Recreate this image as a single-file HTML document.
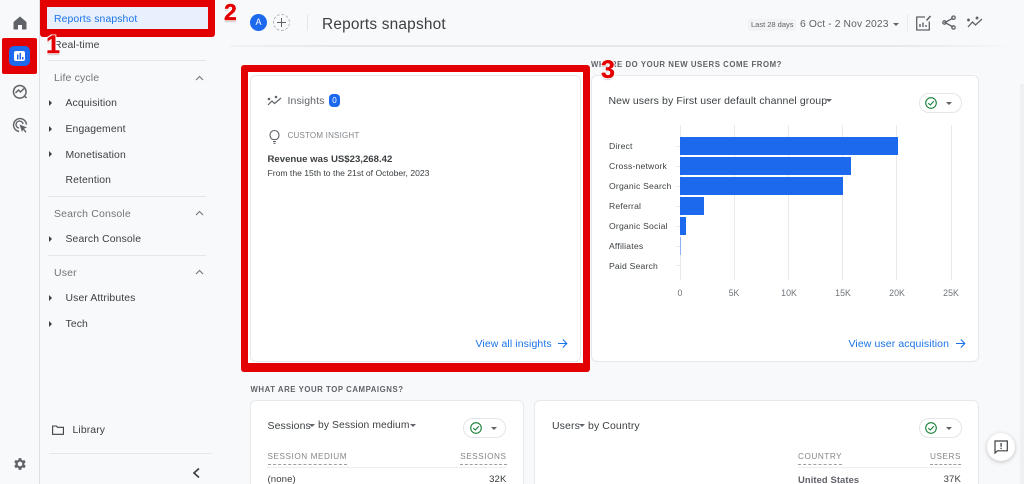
<!DOCTYPE html>
<html lang="en"><head><meta charset="utf-8"><title>Reports snapshot</title>
<style>
html,body{margin:0;padding:0;width:1024px;height:484px;overflow:hidden;background:#f8f9fb;font-family:"Liberation Sans",sans-serif;color:#3c4043}
#p{position:relative;width:1024px;height:484px;overflow:hidden;background:#f8f9fb;filter:blur(.3px)}
.a{position:absolute;white-space:nowrap}
.nav{font-size:10.4px;color:#3c4043;letter-spacing:.12px;line-height:14px}
.sec{font-size:10.5px;color:#70757a;letter-spacing:.15px;line-height:14px}
.hr{position:absolute;height:1px;background:#e4e6e9}
.tri{position:absolute;width:0;height:0;border-top:3px solid transparent;border-bottom:3px solid transparent;border-left:3px solid #3c4043}
.card{position:absolute;background:#fff;border:1px solid #e6e8ec;border-radius:6px;box-sizing:border-box}
.red{position:absolute;background:#e30000}
.num{position:absolute;font-weight:bold;color:#e30000;-webkit-text-stroke:.4px #e30000;text-shadow:1px 1px 0 #fff,-1px 1px 0 #fff,1px -1px 0 #fff,-1px -1px 0 #fff,0 2px 1px #ccc;line-height:1}
.lbl{font-size:8.6px;color:#3c4043;letter-spacing:.2px;left:609px;line-height:12px}
.ax{font-size:8.8px;color:#70757a;top:287px;line-height:12px;transform:translateX(-50%)}
.grid{position:absolute;top:125px;width:1px;height:155px;background:#e8eaed}
.tick{position:absolute;left:676px;width:4px;height:1px;background:#e8eaed}
.bar{position:absolute;left:680px;height:18px;background:#1c69ee}
.link{font-size:10.5px;color:#1a73e8;letter-spacing:.1px;line-height:14px}
.h{font-size:7.8px;font-weight:bold;color:#5f6368;letter-spacing:.55px;line-height:11px}
.th{font-size:8.2px;color:#80868b;letter-spacing:.55px;line-height:11px;border-bottom:1px dashed #9aa0a6;padding-bottom:2px}
.pill{position:absolute;width:43px;height:20px;border:1px solid #e3e5e8;border-radius:11px;background:#fff;box-sizing:border-box}
.dd{position:absolute;width:0;height:0;border-left:3px solid transparent;border-right:3px solid transparent;border-top:3px solid #5f6368}
.t{font-size:10.5px;color:#3c4043;letter-spacing:.1px;line-height:14px}
svg{position:absolute;overflow:visible}
</style></head><body><div id="p">

<!-- rail -->
<div class="a" style="left:39px;top:0;width:1px;height:484px;background:#dfe1e5"></div>
<svg style="left:12px;top:15px" width="16" height="16" viewBox="0 0 16 16"><path d="M8 1.500 1.500 7v7.500h4.500V10h4v4.500h4.500V7z" fill="#5f6368"/></svg>
<div class="red" style="left:2px;top:38px;width:35px;height:36px;border-radius:2px"></div>
<div class="a" style="left:9px;top:46px;width:21px;height:20px;background:#1c69ee;border-radius:5px"></div>
<div class="a" style="left:14px;top:51px;width:11px;height:10px;background:#fff;border-radius:2px"></div>
<svg style="left:14px;top:51px" width="11" height="10"><path d="M3 3.500h1.500v5H3zM5.500 2H7v6.500H5.500zM8 6h1.500v2.500H8z" fill="#1c69ee"/></svg>
<svg style="left:12px;top:83px" width="16" height="16" viewBox="0 0 16 16" fill="none" stroke="#5f6368" stroke-width="1.500"><path d="M13 13.500 14.500 15M14 8A6.300 6.300 0 1 1 1.500 8 6.300 6.300 0 0 1 14 8z"/><path d="M3.500 10 6.500 7l2 2 3.500-3.500"/></svg>
<svg style="left:12px;top:117px" width="16" height="17" viewBox="0 0 16 17" fill="none" stroke="#5f6368" stroke-width="1.400"><path d="M7 14.500A6.500 6.500 0 1 1 14.500 7.500"/><path d="M7 11a3.500 3.500 0 1 1 4-4"/><path d="M7.500 7.500 15 10.500l-3 1.200 2.500 3-1 1-2.500-3L10 15z" fill="#5f6368" stroke="none"/></svg>
<svg style="left:12px;top:456px" width="16" height="16" viewBox="0 0 24 24"><path d="M19.400 13a7.500 7.500 0 0 0 0-2l2.100-1.600-2-3.500-2.500 1a7.500 7.500 0 0 0-1.700-1L15 3.200h-4l-.4 2.700a7.500 7.500 0 0 0-1.700 1l-2.500-1-2 3.500L6.500 11a7.500 7.500 0 0 0 0 2l-2.100 1.600 2 3.500 2.500-1a7.500 7.500 0 0 0 1.700 1l.4 2.700h4l.4-2.700a7.500 7.500 0 0 0 1.700-1l2.500 1 2-3.500zM13 15.500a3.500 3.500 0 1 1 0-7 3.500 3.500 0 0 1 0 7z" fill="#5f6368" transform="translate(-1 0)"/></svg>

<!-- sidebar -->
<div class="red" style="left:40px;top:0;width:175px;height:37px;border-radius:0 0 3px 3px"></div>
<div class="a" style="left:47px;top:7px;width:161px;height:22px;background:#e8f0fe"></div>
<div class="a nav" style="left:54px;top:13px;color:#1a73e8">Reports snapshot</div>
<div class="a nav" style="left:54px;top:39px">Real-time</div>
<div class="hr" style="left:48px;top:60px;width:158px"></div>
<div class="a sec" style="left:54px;top:71px">Life cycle</div>
<svg style="left:195px;top:75px" width="9" height="6"><path d="M1 5 4.500 1.500 8 5" fill="none" stroke="#70757a" stroke-width="1.100"/></svg>
<div class="tri" style="left:49px;top:100px"></div><div class="a nav" style="left:65.500px;top:97px">Acquisition</div>
<div class="tri" style="left:49px;top:126px"></div><div class="a nav" style="left:65.500px;top:123px">Engagement</div>
<div class="tri" style="left:49px;top:151px"></div><div class="a nav" style="left:65.500px;top:149px">Monetisation</div>
<div class="a nav" style="left:65.500px;top:174px">Retention</div>
<div class="hr" style="left:48px;top:196px;width:158px"></div>
<div class="a sec" style="left:54px;top:207px">Search Console</div>
<svg style="left:195px;top:210px" width="9" height="6"><path d="M1 5 4.500 1.500 8 5" fill="none" stroke="#70757a" stroke-width="1.100"/></svg>
<div class="tri" style="left:49px;top:236px"></div><div class="a nav" style="left:65.500px;top:233px">Search Console</div>
<div class="hr" style="left:48px;top:255px;width:158px"></div>
<div class="a sec" style="left:54px;top:266px">User</div>
<svg style="left:195px;top:269px" width="9" height="6"><path d="M1 5 4.500 1.500 8 5" fill="none" stroke="#70757a" stroke-width="1.100"/></svg>
<div class="tri" style="left:49px;top:295px"></div><div class="a nav" style="left:65.500px;top:292px">User Attributes</div>
<div class="tri" style="left:49px;top:321px"></div><div class="a nav" style="left:65.500px;top:318px">Tech</div>
<svg style="left:52px;top:425px" width="12" height="10" fill="none" stroke="#3c4043" stroke-width="1.100"><path d="M.6 1h3.800l1 1.300h6v7H.6z"/></svg>
<div class="a nav" style="left:72.500px;top:424px">Library</div>
<div class="hr" style="left:49px;top:453px;width:163px"></div>
<svg style="left:192px;top:467px" width="9" height="12"><path d="M7 1.500 2 6l5 4.500" fill="none" stroke="#3c4043" stroke-width="1.700"/></svg>

<!-- top bar -->
<div class="a" style="left:230px;top:45px;width:775px;height:2px;background:linear-gradient(90deg,#f1f2f4,#e5e7ea 15%,#e5e7ea 85%,#f5f6f8)"></div>
<div class="a" style="left:250px;top:14px;width:17px;height:17px;border-radius:50%;background:#1c69ee;color:#fff;font-size:9px;line-height:17px;text-align:center">A</div>
<div class="a" style="left:273px;top:14px;width:15px;height:15px;border:1px dashed #b4b8bd;border-radius:50%"></div>
<svg style="left:276px;top:17px" width="11" height="11"><path d="M5.500 1v9M1 5.500h9" stroke="#5f6368" stroke-width="1"/></svg>
<div class="a" style="left:307px;top:14px;width:1px;height:17px;background:#e4e6e9"></div>
<div class="a" style="left:322px;top:15px;font-size:15.400px;line-height:20px;color:#3c4043;letter-spacing:.2px">Reports snapshot</div>
<div class="a" style="left:748px;top:19px;width:48px;height:12px;background:#f1f3f4"></div>
<div class="a" style="left:751px;top:19px;font-size:7.500px;line-height:12px;color:#5f6368">Last 28 days</div>
<div class="a" style="left:800px;top:18px;font-size:10.300px;line-height:14px;color:#5f6368;letter-spacing:.12px">6 Oct - 2 Nov 2023</div>
<div class="dd" style="left:893px;top:23px"></div>
<div class="a" style="left:907px;top:14px;width:1px;height:17px;background:#e8eaed"></div>
<svg style="left:916px;top:15px" width="15" height="16" fill="none" stroke="#5f6368" stroke-width="1.300"><path d="M9 2H.7v13h12.600V6.500"/><path d="M10.500 5.500 14.500 1" stroke-width="1.600"/><path d="M4 12V9M7 12V7.500M10 12v-2" stroke-width="1.400"/></svg>
<svg style="left:942px;top:15px" width="14" height="15" fill="none" stroke="#5f6368" stroke-width="1.300"><path d="M11 3 3 7.500l8 4.500"/><circle cx="11.500" cy="2.700" r="1.700"/><circle cx="2.500" cy="7.500" r="1.700"/><circle cx="11.500" cy="12.500" r="1.700"/></svg>
<svg style="left:967px;top:16px" width="16" height="13" fill="none" stroke="#5f6368" stroke-width="1.300"><path d="M1 11 5.500 6l3 3L15 3"/><circle cx="1.500" cy="4" r=".8" fill="#5f6368"/><circle cx="10" cy="2" r=".8" fill="#5f6368"/></svg>

<!-- scrollbar hint -->
<div class="a" style="left:1020px;top:84px;width:4px;height:400px;background:#eff0f2"></div>

<!-- box 3 -->
<div class="red" style="left:241px;top:65px;width:349px;height:307px;border-radius:3px"></div>
<div class="a" style="left:248px;top:72px;width:335px;height:291px;background:#fff"></div>
<div class="card" style="left:250px;top:75px;width:331px;height:287px"></div>
<svg style="left:267px;top:95px" width="15" height="12" fill="none" stroke="#5f6368" stroke-width="1.200"><path d="M1 10 5 6l2.500 2.500L14 3"/><circle cx="2" cy="4" r=".7" fill="#5f6368"/><circle cx="9" cy="2" r=".7" fill="#5f6368"/></svg>
<div class="a t" style="left:287.500px;top:94px;color:#5f6368">Insights</div>
<div class="a" style="left:329px;top:94px;width:11px;height:13px;border-radius:4px;background:#1c69ee;color:#fff;font-size:8px;line-height:13px;text-align:center">0</div>
<svg style="left:269px;top:129px" width="11" height="15" fill="none" stroke="#5f6368" stroke-width="1.100"><path d="M3.500 10.500C2 9.500 1 8 1 6a4.500 4.500 0 0 1 9 0c0 2-1 3.500-2.500 4.500zM4 12.500h3M4.500 14.300h2"/></svg>
<div class="a" style="left:287.500px;top:129.500px;font-size:8px;line-height:11px;color:#80868b;letter-spacing:.2px">CUSTOM INSIGHT</div>
<div class="a" style="left:267.500px;top:152.500px;font-size:9.600px;font-weight:bold;line-height:14px;color:#3c4043">Revenue was US$23,268.42</div>
<div class="a" style="left:267.500px;top:167px;font-size:8.600px;line-height:12px;color:#3c4043">From the 15th to the 21st of October, 2023</div>
<div class="a link" style="left:475.500px;top:336.500px">View all insights</div>
<svg style="left:557px;top:337.500px" width="11" height="11" fill="none" stroke="#1a73e8" stroke-width="1.100"><path d="M1 5.500h8.500M5.800 1.500l4 4-4 4"/></svg>

<!-- section heading behind 3 -->
<div class="a h" style="left:591px;top:59px">WHERE DO YOUR NEW USERS COME FROM?</div>

<!-- new users card -->
<div class="card" style="left:591px;top:75px;width:388px;height:287px"></div>
<div class="a t" style="left:608.500px;top:93.500px">New users by First user default channel group</div>
<div class="dd" style="left:826px;top:99px"></div>
<div class="pill" style="left:919px;top:93px"></div>
<svg style="left:925px;top:97px" width="12" height="12" fill="none" stroke="#188038" stroke-width="1.100"><circle cx="6" cy="6" r="5.300"/><path d="M3.300 6.200 5.300 8l3.500-3.700"/></svg>
<div class="dd" style="left:946px;top:102px"></div>

<div class="grid" style="left:680px"></div><div class="grid" style="left:734px"></div><div class="grid" style="left:788px"></div><div class="grid" style="left:842px"></div><div class="grid" style="left:896px"></div><div class="grid" style="left:951px"></div>
<div class="tick" style="top:146px"></div><div class="tick" style="top:166px"></div><div class="tick" style="top:186px"></div><div class="tick" style="top:206px"></div><div class="tick" style="top:226px"></div><div class="tick" style="top:246px"></div><div class="tick" style="top:265px"></div>
<div class="bar" style="top:137px;width:218px"></div>
<div class="bar" style="top:157px;width:171px"></div>
<div class="bar" style="top:177px;width:163px"></div>
<div class="bar" style="top:197px;width:23.500px"></div>
<div class="bar" style="top:217px;width:6px"></div>
<div class="bar" style="top:237px;width:1px;background:#8fb3f5"></div>
<div class="a lbl" style="top:140px">Direct</div>
<div class="a lbl" style="top:160px">Cross-network</div>
<div class="a lbl" style="top:180px">Organic Search</div>
<div class="a lbl" style="top:200px">Referral</div>
<div class="a lbl" style="top:220px">Organic Social</div>
<div class="a lbl" style="top:240px">Affiliates</div>
<div class="a lbl" style="top:260px">Paid Search</div>
<div class="a ax" style="left:680px">0</div><div class="a ax" style="left:734px">5K</div><div class="a ax" style="left:789px">10K</div><div class="a ax" style="left:843px">15K</div><div class="a ax" style="left:897px">20K</div><div class="a ax" style="left:951px">25K</div>
<div class="a link" style="left:848.500px;top:336.500px">View user acquisition</div>
<svg style="left:955px;top:337.500px" width="11" height="11" fill="none" stroke="#1a73e8" stroke-width="1.100"><path d="M1 5.500h8.500M5.800 1.500l4 4-4 4"/></svg>

<!-- bottom -->
<div class="a h" style="left:250.500px;top:383.500px">WHAT ARE YOUR TOP CAMPAIGNS?</div>
<div class="card" style="left:250px;top:400px;width:274px;height:100px"></div>
<div class="card" style="left:534px;top:400px;width:445px;height:100px"></div>
<div class="a t" style="left:267.500px;top:419px">Sessions</div>
<div class="dd" style="left:309px;top:424px"></div>
<div class="a t" style="left:318px;top:419px;font-size:10.300px">by Session medium</div>
<div class="dd" style="left:410px;top:424px"></div>
<div class="pill" style="left:463px;top:418px"></div>
<svg style="left:470px;top:422px" width="12" height="12" fill="none" stroke="#188038" stroke-width="1.100"><circle cx="6" cy="6" r="5.300"/><path d="M3.300 6.200 5.300 8l3.500-3.700"/></svg>
<div class="dd" style="left:491px;top:427px"></div>
<div class="a th" style="left:267.500px;top:451px">SESSION MEDIUM</div>
<div class="a th" style="right:517.500px;top:451px">SESSIONS</div>
<div class="hr" style="left:267px;top:467px;width:240px;background:#eceef0"></div>
<div class="a t" style="left:267.500px;top:473px;font-size:9.600px">(none)</div>
<div class="a t" style="right:517.500px;top:473px;font-size:9.600px">32K</div>

<div class="a t" style="left:552px;top:419px">Users</div>
<div class="dd" style="left:579px;top:424px"></div>
<div class="a t" style="left:588px;top:419px">by Country</div>
<div class="pill" style="left:919px;top:418px"></div>
<svg style="left:925px;top:422px" width="12" height="12" fill="none" stroke="#188038" stroke-width="1.100"><circle cx="6" cy="6" r="5.300"/><path d="M3.300 6.200 5.300 8l3.500-3.700"/></svg>
<div class="dd" style="left:946px;top:427px"></div>
<div class="a th" style="left:798px;top:451px">COUNTRY</div>
<div class="a th" style="right:63px;top:451px">USERS</div>
<div class="hr" style="left:798px;top:467px;width:163px;background:#eceef0"></div>
<div class="a t" style="left:798px;top:473px;font-size:9.400px;font-weight:bold;color:#5f6368">United States</div>
<div class="a t" style="right:63px;top:473px;font-size:9.600px">37K</div>

<!-- feedback -->
<div class="a" style="left:987px;top:433px;width:28px;height:28px;border-radius:50%;background:#fff;box-shadow:0 1px 4px rgba(60,64,67,.3)"></div>
<svg style="left:994px;top:440px" width="14" height="14" fill="none" stroke="#3c4043" stroke-width="1.200"><path d="M1 1h12.300v9.800H3.500L1 13z"/><path d="M7.100 3v3.800M7.100 7.800v1.200" stroke-width="1.300"/></svg>

<!-- number badges -->
<div class="num" style="left:46px;top:33px;font-size:25px">1</div>
<div class="num" style="left:224px;top:1px;font-size:23px">2</div>
<div class="num" style="left:601px;top:58px;font-size:25px">3</div>
</div></body></html>
